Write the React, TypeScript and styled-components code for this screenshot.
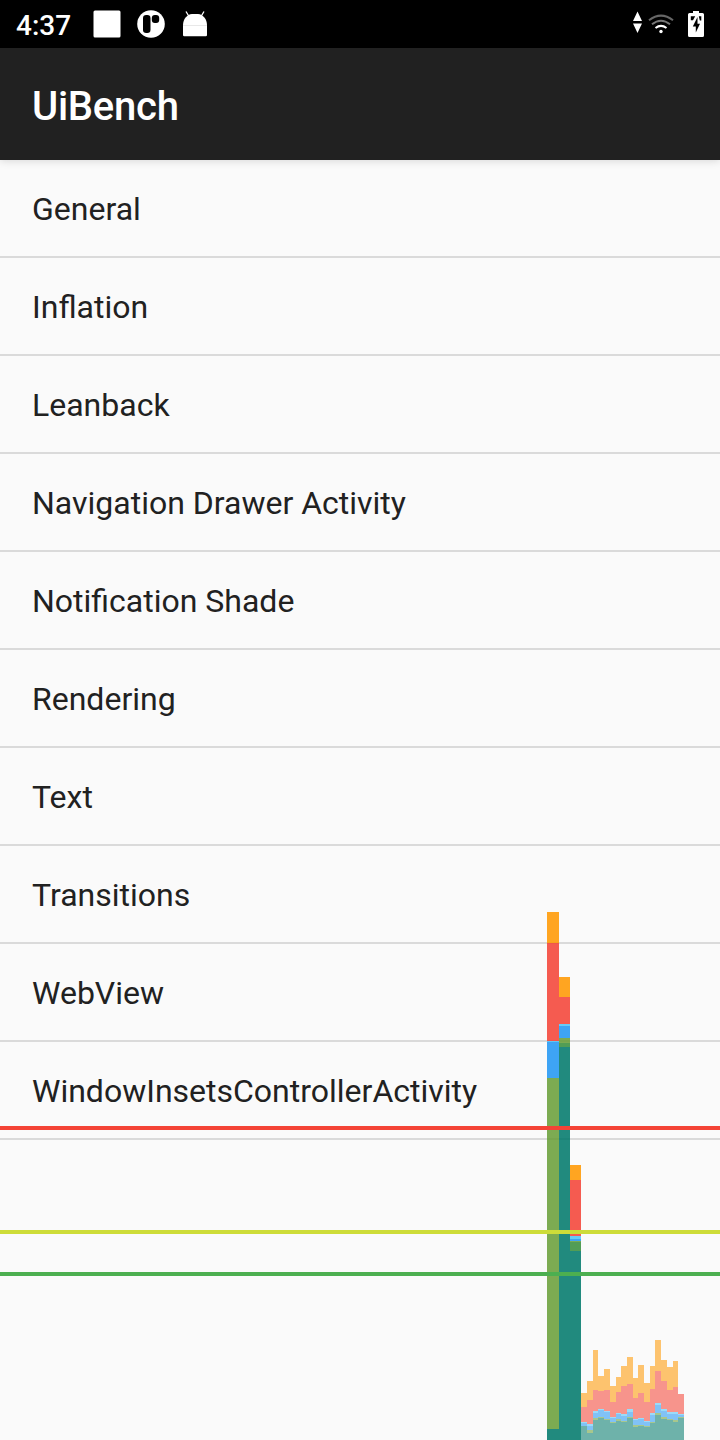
import React from 'react';
import styled, { createGlobalStyle } from 'styled-components';

const GlobalStyle = createGlobalStyle`
  body { margin: 0; background: #fafafa; }
`;

const Screen = styled.div`
  position: relative;
  width: 720px;
  height: 1440px;
  overflow: hidden;
  display: flex;
  flex-direction: column;
  background: #fafafa;
  font-family: Roboto, sans-serif;
`;

const StatusBar = styled.header`
  height: 48px;
  flex: none;
  display: flex;
  align-items: center;
  box-sizing: border-box;
  padding: 0 14px 0 16px;
  background: #000;
  color: #fff;
`;

const Clock = styled.span`
  width: 76px;
  height: 48px;
  font-size: 28px;
  font-weight: 500;
  line-height: 48px;
  padding-top: 2px;
  box-sizing: border-box;
`;

const Notifications = styled.div`
  display: flex;
  gap: 14px;
`;

const SystemIcons = styled.div`
  display: flex;
  margin-left: auto;
`;

const StatusIcon = styled.svg`
  display: block;
  height: 48px;
  fill: #fff;
`;

const AppBar = styled.div`
  height: 112px;
  flex: none;
  display: flex;
  align-items: center;
  box-sizing: border-box;
  padding: 6px 32px 0;
  background: #212121;
  box-shadow: 0 1px 8px rgba(0, 0, 0, 0.14);
`;

const Title = styled.h1`
  margin: 0;
  color: #fff;
  font-size: 40px;
  font-weight: 500;
  line-height: 48px;
  letter-spacing: -0.25px;
`;

const List = styled.ul`
  margin: 0;
  padding: 0;
  list-style: none;
`;

const Row = styled.li`
  height: 98px;
  box-sizing: border-box;
  border-bottom: 2px solid #dadada;
  padding: 2px 32px 0;
  color: #212121;
  font-size: 32px;
  line-height: 94px;
`;

const Profile = styled.svg`
  position: absolute;
  left: 0;
  top: 0;
  pointer-events: none;
`;

const items = [
  'General',
  'Inflation',
  'Leanback',
  'Navigation Drawer Activity',
  'Notification Shade',
  'Rendering',
  'Text',
  'Transitions',
  'WebView',
  'WindowInsetsControllerActivity',
];

const stages = ['#ff9800', '#f44336', '#4fc3f7', '#2196f3', '#689f38', '#388e3c', '#00796b'];

type Frame = { x: number; end: number; tops: number[]; faded?: boolean };

// Each frame lists the top edge of every stage, in the order of `stages`.
const slow: Frame[] = [
  { x: 547, end: 559, tops: [912, 943, 1041, 1042, 1078, 1429, 1429] },
  { x: 559, end: 570, tops: [977, 997, 1024, 1026, 1038, 1043, 1047] },
  { x: 570, end: 581, tops: [1165, 1180, 1236, 1239, 1241, 1242, 1251] },
];

const edges = [581, 587, 593, 598, 604, 610, 616, 621, 627, 633, 638, 644, 650, 655, 661, 667, 673, 678, 684];

const fastTops = [
  [1393, 1407, 1422, 1423, 1426, 1426],
  [1381, 1400, 1424, 1426, 1430, 1433],
  [1350, 1390, 1411, 1413, 1418, 1420],
  [1376, 1391, 1409, 1410, 1417, 1418],
  [1369, 1390, 1411, 1412, 1419, 1420],
  [1386, 1402, 1417, 1418, 1422, 1423],
  [1377, 1392, 1413, 1414, 1419, 1421],
  [1366, 1386, 1414, 1416, 1421, 1422],
  [1357, 1384, 1409, 1412, 1417, 1418],
  [1378, 1398, 1419, 1420, 1425, 1427],
  [1365, 1393, 1418, 1419, 1425, 1426],
  [1383, 1402, 1421, 1422, 1426, 1427],
  [1366, 1389, 1413, 1415, 1422, 1423],
  [1340, 1371, 1403, 1405, 1413, 1415],
  [1360, 1381, 1409, 1411, 1417, 1419],
  [1367, 1390, 1412, 1414, 1419, 1420],
  [1361, 1387, 1412, 1414, 1420, 1422],
  [1394, 1394, 1414, 1415, 1417, 1418],
];

const fast: Frame[] = fastTops.map((t, i) => ({
  x: edges[i],
  end: edges[i + 1],
  tops: [...t, t[5]],
  faded: true,
}));

const thresholds = [
  { y: 1126, color: '#f44336' },
  { y: 1230, color: '#cddc39' },
  { y: 1272, color: '#4caf50' },
];

function FrameBars({ frame }: { frame: Frame }) {
  return (
    <g fillOpacity={frame.faded ? 0.56 : 0.87}>
      {frame.tops.map((top, i) => {
        const bottom = i + 1 < frame.tops.length ? frame.tops[i + 1] : 1440;
        return bottom > top ? (
          <rect key={i} x={frame.x} y={top} width={frame.end - frame.x} height={bottom - top} fill={stages[i]} />
        ) : null;
      })}
    </g>
  );
}

export default function App() {
  return (
    <Screen>
      <GlobalStyle />
      <StatusBar>
        <Clock>4:37</Clock>
        <Notifications>
          <StatusIcon width="30" viewBox="92 0 30 48">
            <rect x="93.5" y="10.5" width="27" height="27" rx="1.5" />
          </StatusIcon>
          <StatusIcon width="30" viewBox="136 0 30 48">
            <circle cx="151" cy="24" r="13.8" />
            <rect x="143" y="15" width="7.5" height="18" rx="3.2" fill="#000" />
            <rect x="151.8" y="15" width="7.4" height="8" rx="3" fill="#000" />
          </StatusIcon>
          <StatusIcon width="30" viewBox="180 0 30 48">
            <path d="M183 25.300C183 19 187 14.500 192 14h6c5 .5 9 5 9 11.300V35q0 1.200-1.200 1.200H184.200Q183 36.200 183 35z" />
            <path d="M183 25.500h24" stroke="#e8e8e8" />
            <path d="M186 11.500l3 5M204 11.500l-3 5" stroke="#fff" strokeWidth="1.300" />
          </StatusIcon>
        </Notifications>
        <SystemIcons>
          <StatusIcon width="74" viewBox="632 0 74 48">
            <path d="M637.500 11.500L642 21h-9zM633 23.500h9l-4.500 9.500z" />
            <g fill="none" strokeWidth="2">
              <path d="M649 20.300q12-9.300 24 0" stroke="#666" />
              <path d="M652 24.300q9-7.200 18 0" stroke="#777" />
              <path d="M655.500 28q5.500-4.300 11 0" stroke="#fff" />
            </g>
            <circle cx="661" cy="31.500" r="1.700" />
            <path d="M693 11h6v2h3.500q1.500 0 1.500 1.500v21q0 1.500-1.500 1.500h-13q-1.500 0-1.500-1.500v-21q0-1.500 1.500-1.500H693z" />
            <path d="M690.800 16.200h4.400l-2.200 4h-2.200zM698.800 16.200h2.500v4.300h-1.500zM697.500 17v6.800h2.500L695.800 32.500v-6h-3z" fill="#000" />
          </StatusIcon>
        </SystemIcons>
      </StatusBar>
      <AppBar>
        <Title>UiBench</Title>
      </AppBar>
      <List>
        {items.map((item) => (
          <Row key={item}>{item}</Row>
        ))}
      </List>
      <Profile width="720" height="1440" viewBox="0 0 720 1440" shapeRendering="crispEdges">
        {[...slow, ...fast].map((frame) => (
          <FrameBars key={frame.x} frame={frame} />
        ))}
        {thresholds.map((t) => (
          <rect key={t.y} x="0" y={t.y} width="720" height="4" fill={t.color} />
        ))}
      </Profile>
    </Screen>
  );
}
